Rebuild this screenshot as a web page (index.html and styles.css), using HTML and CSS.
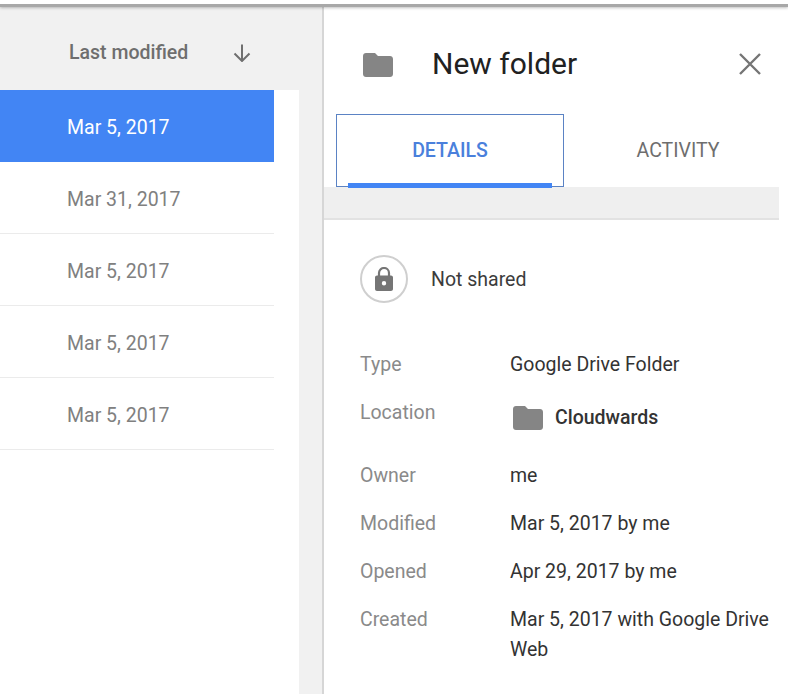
FILE: index.html
```html
<!DOCTYPE html>
<html lang="en">
<head>
	<meta charset="UTF-8">
	<title>New folder</title>
	<link rel="stylesheet" href="styles.css">
</head>
<body>
	<div class='edge'></div>
	<div class='panes'>
		<div class='files'>
			<div class='files-head'>
				<span class='sort-name'>Last modified</span>
				<svg class='sort-arrow' width='18' height='18' viewBox='0 0 18 18'><path d='M9 0.5V17M1.5 9.5L9 17L16.5 9.5' fill='none' stroke='#6f6f6f' stroke-width='2'/></svg>
			</div>
			<ul class='file-list'>
				<li class='cur'>Mar 5, 2017</li>
				<li>Mar 31, 2017</li>
				<li>Mar 5, 2017</li>
				<li>Mar 5, 2017</li>
				<li>Mar 5, 2017</li>
			</ul>
		</div>
		<div class='details'>
			<div class='title-row'>
				<svg class='title-folder' width='30' height='24' viewBox='0 0 30 24'><path d='M3 0H12L15 3H27C28.7 3 30 4.3 30 6V21C30 22.700 28.7 24 27 24H3C1.300 24 0 22.700 0 21V3C0 1.300 1.300 0 3 0Z' fill='#858585'/></svg>
				<h1 class='title'>New folder</h1>
				<svg class='close' width='22' height='22' viewBox='0 0 22 22'><path d='M1 1L21 21M21 1L1 21' fill='none' stroke='#757575' stroke-width='2.400'/></svg>
			</div>
			<div class='tabs'>
				<div class='tab active'>DETAILS<span class='tab-line'></span></div>
				<div class='tab'>ACTIVITY</div>
			</div>
			<div class='strip'></div>
			<div class='share'>
				<span class='lock'>
					<svg width='18' height='24' viewBox='0 0 18 24'><path d='M4 9V6a5 5 0 0 1 10 0V9' fill='none' stroke='#757575' stroke-width='2.200'/><path d='M2 8.500H16C17.100 8.500 18 9.400 18 10.500V22C18 23.100 17.100 24 16 24H2C0.900 24 0 23.100 0 22V10.500C0 9.400 0.900 8.500 2 8.500ZM9 14A2.200 2.200 0 1 0 9 18.400A2.200 2.200 0 1 0 9 14Z' fill='#757575' fill-rule='evenodd'/></svg>
				</span>
				<span class='share-text'>Not shared</span>
			</div>
			<dl class='props'>
				<dt>Type</dt>
				<dd>Google Drive Folder</dd>
				<dt>Location</dt>
				<dd class='place'>
					<svg width='30' height='24' viewBox='0 0 30 24'><path d='M3 0H12L15 3H27C28.700 3 30 4.300 30 6V21C30 22.700 28.700 24 27 24H3C1.300 24 0 22.700 0 21V3C0 1.300 1.300 0 3 0Z' fill='#858585'/></svg>
					<span>Cloudwards</span>
				</dd>
				<dt>Owner</dt>
				<dd>me</dd>
				<dt>Modified</dt>
				<dd>Mar 5, 2017 by me</dd>
				<dt>Opened</dt>
				<dd>Apr 29, 2017 by me</dd>
				<dt>Created</dt>
				<dd>Mar 5, 2017 with Google Drive Web</dd>
			</dl>
		</div>
	</div>
</body>
</html>
```

FILE: styles.css
```css
*{
	padding: 0;
	margin: 0;
	box-sizing: border-box;
}
html,body{
	height: 100%;
	overflow: hidden;
}
body{
	background: #fff;
	font-family: Roboto, "Liberation Sans", sans-serif;
	font-size: 19.5px;
}
.edge{
	height: 7px;
	border-bottom: 3px solid #a8a8a8;
	box-shadow: 0 1px 3px rgba(0,0,0,0.25);
	position: relative;
}
.panes{
	display: flex;
	height: 687px;
}

/* file list */
.files{
	width: 324px;
	flex: none;
	background: #f1f1f1;
	border-right: 2px solid #d6d6d6;
	display: flex;
	flex-direction: column;
}
.files-head{
	height: 83px;
	flex: none;
	display: flex;
	align-items: center;
	padding: 8px 0 0 69px;
}
.sort-name{
	width: 164px;
	font-weight: 500;
	color: #6e6e6e;
}
.file-list{
	list-style: none;
	width: 299px;
	flex: 1;
	background: #fff;
	padding-right: 25px;
}
.file-list li{
	height: 72px;
	line-height: 75px;
	padding-left: 67px;
	color: #808080;
	border-bottom: 1px solid #ebebeb;
}
.file-list .cur{
	background: #4285f4;
	color: #fff;
	border-bottom: 0;
}

/* details pane */
.details{
	flex: 1;
	min-width: 0;
}
.title-row{
	height: 107px;
	display: flex;
	align-items: center;
	padding: 6px 0 0 39px;
}
.title-folder{
	flex: none;
	margin-top: 3px;
}
.title{
	flex: none;
	width: 346px;
	padding-left: 39px;
	font-size: 30px;
	font-weight: 400;
	color: #212121;
}
.close{
	flex: none;
}
.tabs{
	height: 73px;
	display: flex;
	margin-left: 12px;
}
.tab{
	position: relative;
	flex: none;
	width: 228px;
	line-height: 74px;
	text-align: center;
	color: #6e6e6e;
}
.tab.active{
	border: 1px solid #5b83c4;
	line-height: 72px;
	font-weight: 500;
	color: #4a80dc;
}
.tab-line{
	position: absolute;
	left: 11px;
	right: 11px;
	bottom: -2px;
	height: 5px;
	background: #4285f4;
}
.strip{
	width: 455px;
	height: 33px;
	background: #efefef;
	border-bottom: 2px solid #e2e2e2;
}
.share{
	display: flex;
	align-items: center;
	height: 48px;
	margin: 35px 0 0 36px;
}
.lock{
	width: 48px;
	height: 48px;
	border: 2px solid #cfcfcf;
	border-radius: 50%;
	display: flex;
	align-items: center;
	justify-content: center;
}
.share-text{
	margin-left: 23px;
	color: #3c3c3c;
}
.props{
	display: grid;
	grid-template-columns: 150px 1fr;
	margin: 47px 0 0 36px;
	line-height: 30px;
	row-gap: 18px;
}
.props dt{
	color: #8a8a8a;
}
.props dd{
	color: #333;
	padding-right: 8px;
}
.props .place{
	display: flex;
	align-items: center;
	gap: 12px;
	height: 45px;
	padding: 0 0 5px 3px;
	color: #333;
	font-weight: 500;
}
.place svg{
	width: 30px;
	height: 24px;
}
```
